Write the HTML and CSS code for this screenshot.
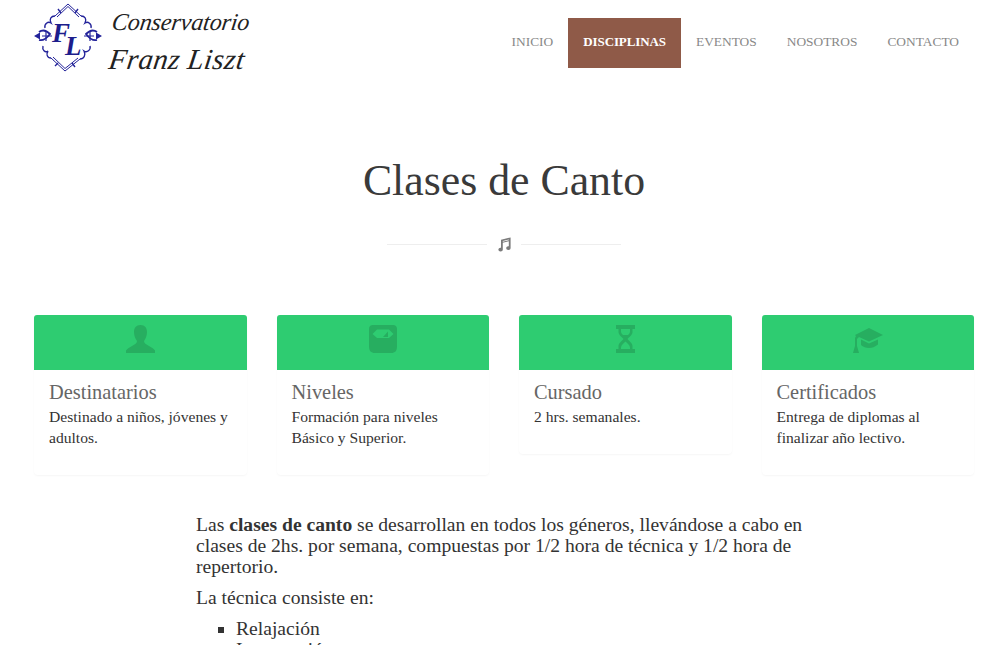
FILE: index.html
```html
<!DOCTYPE html>
<html lang="es">
<head>
<meta charset="utf-8">
<title>Clases de Canto</title>
<link rel="stylesheet" href="styles.css">
</head>
<body>
<div class="page">
  <header class="header">
    <a class="logo" href="#">
      <svg class="logo-mark" width="70" height="70" viewBox="0 0 70 70" aria-hidden="true">
        <g fill="none" stroke="#23239a">
          <path d="M34 1 L47 13 M34 1 L21 13 M31 68 L46 56 M31 68 L17 55" stroke-width="1"/>
          <path d="M34 3.500 L45 14 M34 3.500 L23 14 M31 65.500 L44 55 M31 65.500 L19 54" stroke-width="1"/>
          <path d="M47 13 C51 13 53 16 51 20 C54 18 58 21 57 25 M21 13 C17 13 15 16 17 20 C14 18 10 21 11 25 M46 56 C50 56 52 52 50 48 C53 50 57 47 56 43 M17 55 C13 55 12 51 14 48 C11 50 8 47 9 43" stroke-width="1.400"/>
          <path d="M41 10 L44 6 M27 10 L24 6 M38 60 L41 64 M24 60 L21 63" stroke-width="1.400"/>
          <path d="M5 29 C9 26 13 28 16 31 C13 35 9 38 5 37 M63 29 C59 26 55 28 52 31 C55 35 59 38 63 37" stroke-width="1.800"/>
          <path d="M8 33 H18 M60 33 H50 M12 28 V38 M56 28 V38" stroke-width="1.200"/>
        </g>
        <path fill="#23239a" d="M0 33 L6 29.500 L6 36.500 Z M68 33 L62 29.500 L62 36.500 Z"/>
        <text class="mono" x="18" y="39">F<tspan dx="-5" dy="13">L</tspan></text>
      </svg>
      <span class="logo-text">
        <span class="logo-line">Conservatorio</span>
        <span class="logo-line logo-line-2">Franz Liszt</span>
      </span>
    </a>
    <nav class="nav">
      <a href="#">INICIO</a>
      <a href="#" class="active">DISCIPLINAS</a>
      <a href="#">EVENTOS</a>
      <a href="#">NOSOTROS</a>
      <a href="#">CONTACTO</a>
    </nav>
  </header>

  <section class="title-block">
    <h1>Clases de Canto</h1>
    <div class="divider">
      <span class="rule"></span>
      <svg width="14" height="15" viewBox="0 0 14 15" aria-hidden="true"><path fill="#7b7b7b" d="M4 2.800 L13.600 .4 V11 A2.200 1.900 0 1 1 11.800 9.200 V4.300 L5.800 5.800 V12.500 A2.200 1.900 0 1 1 4 10.700 Z M5.800 3.900 V4.700 L11.800 3.200 V2.400 Z"/></svg>
      <span class="rule"></span>
    </div>
  </section>

  <section class="cards">
    <article class="card">
      <div class="card-head">
        <svg width="29" height="28" viewBox="0 0 29 28" aria-hidden="true"><path fill="#27ae60" d="M14.500 0 C19 0 21 3 21 7 C21 11 19.500 14 18 16 C18 18 20 19.500 23 21 C26 22.500 28 24 29 25.500 V28 H0 V25.500 C1 24 3 22.500 6 21 C9 19.500 11 18 11 16 C9.500 14 8 11 8 7 C8 3 10 0 14.500 0 Z"/></svg>
      </div>
      <div class="card-body">
        <h3>Destinatarios</h3>
        <p>Destinado a niños, jóvenes y adultos.</p>
      </div>
    </article>
    <article class="card">
      <div class="card-head">
        <svg width="28" height="28" viewBox="0 0 28 28" aria-hidden="true"><path fill="#27ae60" fill-rule="evenodd" d="M4 0 H24 C26.500 0 28 1.500 28 4 V21 C28 26 26 28 22 28 H6 C2 28 0 26 0 21 V4 C0 1.500 1.500 0 4 0 Z M8 4.500 L3.500 9 L8 13 H20 L24.500 9 L20 4.500 Z"/><path fill="#27ae60" d="M14 12 L19 6.500 L19 12 Z"/></svg>
      </div>
      <div class="card-body">
        <h3>Niveles</h3>
        <p>Formación para niveles Básico y Superior.</p>
      </div>
    </article>
    <article class="card">
      <div class="card-head">
        <svg width="19" height="28" viewBox="0 0 19 28" aria-hidden="true"><path fill="#27ae60" fill-rule="evenodd" d="M0 0 H19 V4 H16.500 V7 C16.500 10 13 12 11.500 14 C13 16 16.500 18 16.500 21 V24 H19 V28 H0 V24 H2.500 V21 C2.500 18 6 16 7.500 14 C6 12 2.500 10 2.500 7 V4 H0 Z M5 4 V6.500 C5 8 6 9 7 10 H12 C13 9 14 8 14 6.500 V4 Z M9.500 16.500 C8 18 5 20 5 22.500 V24 H14 V22.500 C14 20 11 18 9.500 16.500 Z"/></svg>
      </div>
      <div class="card-body">
        <h3>Cursado</h3>
        <p>2 hrs. semanales.</p>
      </div>
    </article>
    <article class="card">
      <div class="card-head">
        <svg width="30" height="25" viewBox="0 0 30 25" aria-hidden="true"><path fill="#27ae60" d="M16 0 L30 7 L16 13.500 L6 9 L4 11 V18 L6 25 H0 L2 18 V10 L3 8 L2 7 Z M8 11.500 L16 15.500 L25 11.500 V16.500 C22 19 19 20 16 20 C13 20 10 19 8 17 Z"/></svg>
      </div>
      <div class="card-body">
        <h3>Certificados</h3>
        <p>Entrega de diplomas al finalizar año lectivo.</p>
      </div>
    </article>
  </section>

  <section class="content">
    <p>Las <strong>clases de canto</strong> se desarrollan en todos los géneros, llevándose a cabo en clases de 2hs. por semana, compuestas por 1/2 hora de técnica y 1/2 hora de repertorio.</p>
    <p>La técnica consiste en:</p>
    <ul>
      <li>Relajación</li>
      <li>Impostación</li>
    </ul>
  </section>
</div>
</body>
</html>
```
FILE: styles.css
```css
* { box-sizing: border-box; }
html, body { margin: 0; padding: 0; height: 100%; overflow: hidden; background: #fff; }
body { font-family: "Liberation Serif", serif; color: #333; }
.page { padding: 0 26px 0 34px; }
a { text-decoration: none; color: inherit; }

.header { display: flex; justify-content: space-between; align-items: flex-start; height: 95px; }
.logo { display: flex; gap: 6px; padding-top: 3px; }
.logo-mark { display: block; flex: none; }
.mono { font-family: "Liberation Serif", serif; font-style: italic; font-weight: 700; font-size: 27px; fill: #1d1d8c; }
.logo-text { display: flex; flex-direction: column; font-family: "Liberation Serif", serif; font-style: italic; color: #222; font-size: 24px; line-height: 37px; transform: skewX(-8deg); height: 70px; padding-top: 1px; }
.logo-line { display: block; letter-spacing: -.1px; }
.logo-line-2 { font-size: 29px; letter-spacing: .4px; padding-left: 2px; }

.nav { display: flex; margin-top: 18px; font-size: 13.400px; color: #888; }
.nav a { display: block; padding: 0 15px; line-height: 48px; height: 50px; }
.nav a.active { background: #8f5a48; color: #fff; font-size: 13px; font-weight: 700; letter-spacing: -.1px; }

.title-block { padding-top: 57px; }
h1 { margin: 0; font-size: 43.800px; line-height: 56px; font-weight: 400; text-align: center; color: #3a3a3a; }
.divider { display: flex; justify-content: center; align-items: center; gap: 10px; margin-top: 28px; height: 16px; }
.rule { width: 100px; height: 1px; background: #eee; margin-top: 1px; }

.cards { display: grid; grid-template-columns: repeat(4, 1fr); gap: 30px; align-items: start; margin-top: 63px; }
.card { border-radius: 4px; background: #fff; box-shadow: 0 1px 2px rgba(0, 0, 0, .04); min-width: 0; }
.card-head { height: 55px; background: #2ecc71; border-radius: 3px 3px 0 0; display: flex; justify-content: center; align-items: flex-end; padding-bottom: 17px; }
.card-head svg { display: block; }
.card-body { padding: 11px 15px 27px; }
h3 { margin: 0; font-size: 20.400px; line-height: 22px; font-weight: 400; color: #666; }
.card-body p { margin: 3px 0 0; font-size: 15.600px; line-height: 21px; color: #333; }

.content { width: 616px; margin: 39px auto 0; font-size: 19.600px; line-height: 21px; color: #333; }
.content p { margin: 0 0 10px; }
.content strong { font-weight: 700; }
.content ul { list-style: square; margin: 0; padding-left: 40px; }
```
